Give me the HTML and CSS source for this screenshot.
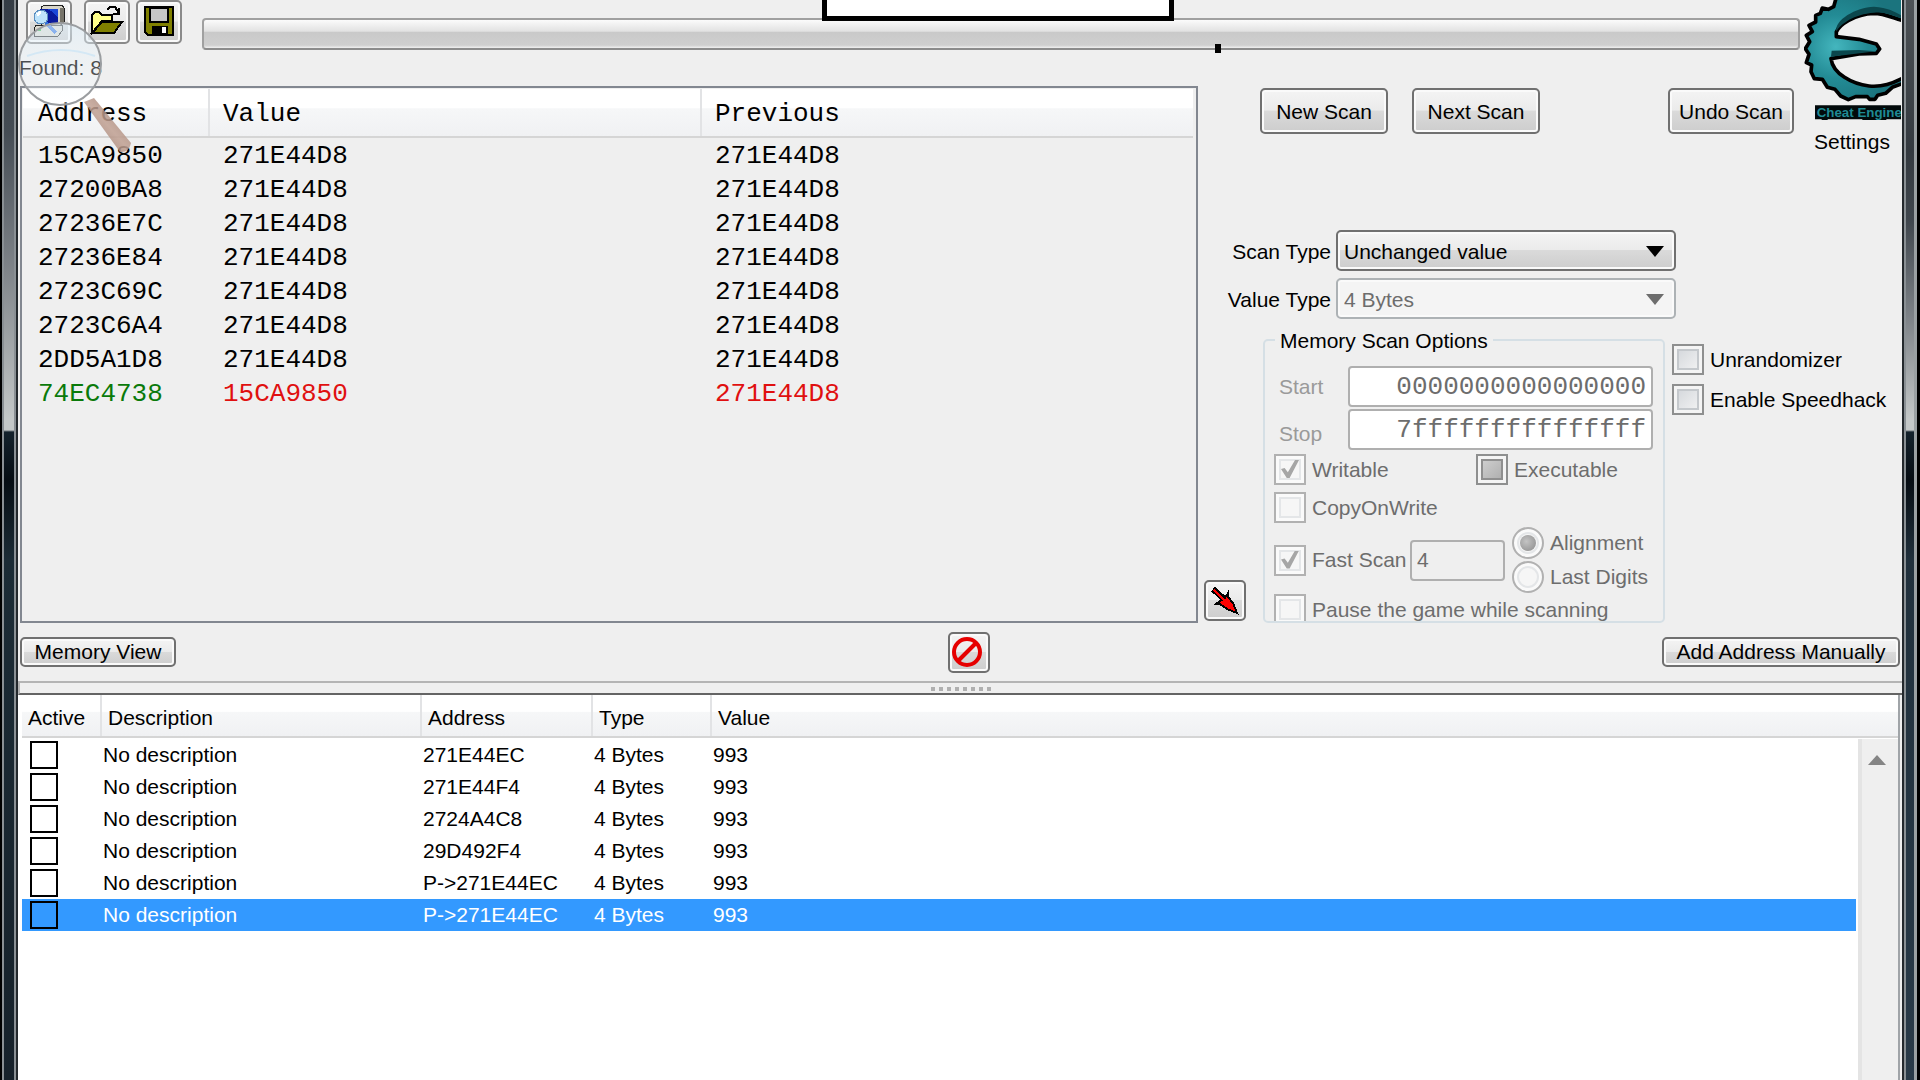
FILE: index.html
```html
<!DOCTYPE html>
<html lang="en">
<head>
<meta charset="utf-8">
<title>Cheat Engine</title>
<link rel="stylesheet" href="styles.css">
</head>
<body>
<div class="window">
  <div class="frame frame-left"></div>
  <main class="client">
    <section class="upper">
      <header class="top">
        <div class="toolbar">
          <button class="btn tool" type="button" aria-label="Select process">
            <svg width="32" height="32" viewBox="0 0 32 32" shape-rendering="crispEdges">
              <path d="M8 2L12 0H29L31 3V17L27 21H8Z" fill="#d8d5c8" stroke="#222" stroke-width="1"/>
              <path d="M27 3H31V18L27 20Z" fill="#77746a"/>
              <rect x="7" y="4" width="18" height="14" fill="#0a1a9c"/>
              <path d="M14 4H25V12L18 6Z" fill="#1c48d8"/>
              <path d="M3 20H29V26L25 31H1V24Z" fill="#dcdad0" stroke="#222" stroke-width="1"/>
              <rect x="5" y="24" width="3" height="2" fill="#2bb33a"/>
              <path d="M13 18L23 28" stroke="#2f6fe0" stroke-width="4"/>
              <circle cx="8" cy="12" r="7" fill="#bfe4fb" stroke="#5c8fc0" stroke-width="1"/>
              <path d="M4 10L8 7" stroke="#fff" stroke-width="3"/>
            </svg>
          </button>
          <button class="btn tool tool-open" type="button" aria-label="Open file">
            <svg width="34" height="30" viewBox="0 0 34 30" shape-rendering="crispEdges">
              <path d="M17 4L20 1H25L29 7M29 2V8H23" fill="none" stroke="#000" stroke-width="2"/>
              <path d="M2 27V9L5 6H9L12 9H22V15H12L2 27Z" fill="#ffff8a" stroke="#000" stroke-width="2"/>
              <path d="M2 27L12 16H32L24 27Z" fill="#808000" stroke="#000" stroke-width="2"/>
            </svg>
          </button>
          <button class="btn tool" type="button" aria-label="Save file">
            <svg width="30" height="30" viewBox="0 0 30 30" shape-rendering="crispEdges">
              <path d="M1 1H29V29H4L1 26Z" fill="#808000" stroke="#000" stroke-width="2"/>
              <rect x="6" y="2" width="18" height="14" fill="#c6c6c6" stroke="#000" stroke-width="2"/>
              <rect x="8" y="20" width="16" height="9" fill="#000"/>
              <rect x="18" y="21" width="4" height="6" fill="#fff"/>
            </svg>
          </button>
          <div class="progress" role="progressbar" aria-label="Scan progress"></div>
        </div>
        <p class="found">Found: 8</p>
      </header>

      <div class="logo">
        <svg width="97" height="120" viewBox="135 0 291 360" role="img" aria-label="Cheat Engine">
          <defs>
            <radialGradient id="teal" gradientUnits="userSpaceOnUse" cx="230" cy="140" r="190">
              <stop offset="0" stop-color="#44b6be"/>
              <stop offset=".5" stop-color="#238b95"/>
              <stop offset="1" stop-color="#1b747e"/>
            </radialGradient>
          </defs>
          <path d="M232-8L224 20L208 28L190 24L184 40L170 46L170 66L150 76L160 95L142 106L152 125L139 146L150 163L142 188L158 195L156 215L166 236L190 238L205 262L228 268L245 288L268 299L290 290L325 290L332 298L348 298L356 286L380 280L400 262L432 250V234C400 250 370 262 330 258C280 252 222 222 216 176L300 162L352 160L362 147L352 132L300 118L232 110V96C240 75 285 42 345 40C375 40 402 54 432 62V-8Z" fill="url(#teal)" stroke="#000" stroke-width="11" stroke-linejoin="round"/>
          <path d="M216 170L352 154L300 150L218 152ZM232 94C226 60 290 22 345 20C385 22 410 36 426 46V54C400 46 375 34 345 38C285 42 245 72 232 94" fill="#0b474d"/>
          <path d="M168 316H426V358H382V364H310V358H206V364H188V358H168Z" fill="#020a0b"/>
          <text class="logo-text" x="173" y="352">Cheat Engine</text>
        </svg>
        <a class="settings" href="#settings">Settings</a>
      </div>

      <div class="results">
        <table class="result-table">
          <colgroup><col class="c-addr"><col class="c-val"><col></colgroup>
          <thead><tr><th>Address</th><th>Value</th><th>Previous</th></tr></thead>
          <tbody>
            <tr><td>15CA9850</td><td>271E44D8</td><td>271E44D8</td></tr>
            <tr><td>27200BA8</td><td>271E44D8</td><td>271E44D8</td></tr>
            <tr><td>27236E7C</td><td>271E44D8</td><td>271E44D8</td></tr>
            <tr><td>27236E84</td><td>271E44D8</td><td>271E44D8</td></tr>
            <tr><td>2723C69C</td><td>271E44D8</td><td>271E44D8</td></tr>
            <tr><td>2723C6A4</td><td>271E44D8</td><td>271E44D8</td></tr>
            <tr><td>2DD5A1D8</td><td>271E44D8</td><td>271E44D8</td></tr>
            <tr class="changed"><td class="static">74EC4738</td><td>15CA9850</td><td>271E44D8</td></tr>
          </tbody>
        </table>
      </div>

      <div class="scan-buttons">
        <button class="btn scan" type="button">New Scan</button>
        <button class="btn scan" type="button">Next Scan</button>
        <button class="btn scan undo" type="button">Undo Scan</button>
      </div>

      <form class="options">
        <div class="pick">
          <label for="scan-type">Scan Type</label>
          <span class="combo"><select id="scan-type"><option>Unchanged value</option></select></span>
        </div>
        <div class="pick">
          <label for="value-type">Value Type</label>
          <span class="combo off"><select id="value-type" disabled><option>4 Bytes</option></select></span>
        </div>
        <div class="details">
          <button class="btn copy" type="button" aria-label="Add selected addresses">
            <svg width="28" height="28" viewBox="0 0 28 28" shape-rendering="crispEdges">
              <path d="M2 2L13 12" stroke="#000" stroke-width="6"/>
              <path d="M17 6V10L22 16L26 26L16 22L9 17H5L9 14L14 11Z" fill="#f00" stroke="#000" stroke-width="2"/>
              <path d="M3 3L14 14" stroke="#f00" stroke-width="2"/>
            </svg>
          </button>
          <fieldset class="memory">
            <legend>Memory Scan Options</legend>
            <div class="range">
              <label for="start">Start</label>
              <input class="field hex" id="start" type="text" value="0000000000000000" disabled>
              <label class="low" for="stop">Stop</label>
              <input class="field hex" id="stop" type="text" value="7fffffffffffffff" disabled>
            </div>
            <div class="pair">
              <label class="tick"><input type="checkbox" checked disabled>Writable</label>
              <label class="tick"><input class="mixed" type="checkbox" disabled>Executable</label>
            </div>
            <label class="tick"><input type="checkbox" disabled>CopyOnWrite</label>
            <div class="fast">
              <label class="tick"><input type="checkbox" checked disabled>Fast Scan</label>
              <input class="field align" type="text" value="4" aria-label="Alignment value" disabled>
              <div class="radios">
                <label class="tick"><input type="radio" name="mode" checked disabled>Alignment</label>
                <label class="tick"><input type="radio" name="mode" disabled>Last Digits</label>
              </div>
            </div>
            <label class="tick"><input type="checkbox" disabled>Pause the game while scanning</label>
          </fieldset>
          <div class="extras">
            <label class="tick"><input type="checkbox">Unrandomizer</label>
            <label class="tick"><input type="checkbox">Enable Speedhack</label>
          </div>
        </div>
      </form>
    </section>

    <div class="actions">
      <button class="btn slim view" type="button">Memory View</button>
      <button class="btn clear" type="button" aria-label="Clear address list">
        <svg width="34" height="32" viewBox="0 0 34 32">
          <circle cx="15" cy="16" r="13" fill="none" stroke="#e60000" stroke-width="4"/>
          <path d="M6 25L24 7" stroke="#e60000" stroke-width="4"/>
        </svg>
      </button>
      <button class="btn slim add" type="button">Add Address Manually</button>
    </div>

    <div class="splitter"><i></i><i></i><i></i><i></i><i></i><i></i><i></i><i></i></div>

    <section class="cheats">
      <table class="cheat-table">
        <colgroup><col class="d-active"><col class="d-desc"><col class="d-addr"><col class="d-type"><col></colgroup>
        <thead><tr><th>Active</th><th>Description</th><th>Address</th><th>Type</th><th>Value</th></tr></thead>
        <tbody>
          <tr><td><input type="checkbox" aria-label="Active"></td><td>No description</td><td>271E44EC</td><td>4 Bytes</td><td>993</td></tr>
          <tr><td><input type="checkbox" aria-label="Active"></td><td>No description</td><td>271E44F4</td><td>4 Bytes</td><td>993</td></tr>
          <tr><td><input type="checkbox" aria-label="Active"></td><td>No description</td><td>2724A4C8</td><td>4 Bytes</td><td>993</td></tr>
          <tr><td><input type="checkbox" aria-label="Active"></td><td>No description</td><td>29D492F4</td><td>4 Bytes</td><td>993</td></tr>
          <tr><td><input type="checkbox" aria-label="Active"></td><td>No description</td><td>P-&gt;271E44EC</td><td>4 Bytes</td><td>993</td></tr>
          <tr class="selected"><td><input type="checkbox" aria-label="Active"></td><td>No description</td><td>P-&gt;271E44EC</td><td>4 Bytes</td><td>993</td></tr>
        </tbody>
      </table>
      <div class="scrollbar"><span class="up"></span></div>
    </section>
  </main>
  <div class="frame frame-right"></div>
  <div class="popup"></div>
  <div class="caret"></div>
  <svg class="lens" width="130" height="140" viewBox="0 0 130 140">
    <defs>
      <linearGradient id="glass" x1="0" y1="0" x2="0" y2="1">
        <stop offset="0" stop-color="#dcedf8" stop-opacity=".6"/>
        <stop offset=".4" stop-color="#e8f5fd" stop-opacity=".3"/>
        <stop offset="1" stop-color="#fff" stop-opacity=".4"/>
      </linearGradient>
      <linearGradient id="wood" x1="0" y1="1" x2="1" y2="0">
        <stop offset="0" stop-color="#8c6a5c"/>
        <stop offset=".5" stop-color="#c0a092"/>
        <stop offset="1" stop-color="#8f6e60"/>
      </linearGradient>
    </defs>
    <path d="M69 82L79 78L116 123Q114 133 105 132Z" fill="url(#wood)" fill-opacity=".85"/>
    <circle cx="45" cy="44" r="41" fill="url(#glass)" stroke="#9a9da0" stroke-width="2"/>
    <path d="M12 36Q46 24 80 36" fill="none" stroke="#d4e8f5" stroke-width="2"/>
  </svg>
</div>
</body>
</html>
```
FILE: styles.css
```css
* { box-sizing: border-box; }

body {
  margin: 0;
  background: #efefef;
  color: #000;
  font: 21px/26px "Liberation Sans", Arial, sans-serif;
}

button, input, select { font: inherit; color: inherit; margin: 0; }
svg { display: block; }
p { margin: 0; }

.window {
  position: relative;
  display: grid;
  grid-template-columns: 18px minmax(0, 1fr) 18px;
  min-height: 100vh;
  overflow: hidden;
}

/* glass borders at the sides of the window */
.frame {
  background:
    linear-gradient(90deg, #000 2px, #8a9094 2px 4px, transparent 4px 14px, #8a9094 14px 16px, #24292d 16px),
    linear-gradient(#353d45, #444c54 130px, #7f8489 270px, #c4c8c8 420px, #c4c8c8 430px, #14222c 432px, #060d13 480px, #1c2c36 560px, #17222b 100%);
}
.frame-right {
  background:
    linear-gradient(90deg, #24292d 2px, #8a9094 2px 4px, transparent 4px 12px, #9aa0a2 12px 15px, #000 15px),
    linear-gradient(#4d5256, #33393f 150px, #3f464d 220px, #7f8489 320px, #c4c8c8 420px, #c4c8c8 430px, #14222c 432px, #060d13 480px, #20303c 560px, #293a48 100%);
}

.client { display: flex; flex-direction: column; min-width: 0; }

.upper {
  display: grid;
  grid-template-columns: minmax(0, 1fr) 600px 102px;
  grid-template-rows: 86px 70px auto;
}
.top { grid-column: 1 / 3; }
.logo { grid-column: 3; grid-row: 1 / 3; padding-left: 4px; }
.results { grid-column: 1; grid-row: 2 / 4; }
.scan-buttons { grid-column: 2; grid-row: 2; }
.options { grid-column: 2 / 4; grid-row: 3; }

.btn {
  display: flex;
  align-items: center;
  justify-content: center;
  padding: 0;
  border: 2px solid #707070;
  border-radius: 5px;
  background: linear-gradient(#f4f4f4, #ebebeb 48%, #dadada 50%, #cdcdcd);
  box-shadow: inset 0 0 0 2px #fafafa;
  white-space: nowrap;
}

.toolbar { display: flex; align-items: flex-start; padding-left: 8px; gap: 6px; }
.tool { width: 46px; height: 44px; border-color: #8a8a8a; padding-bottom: 2px; }
.tool-open { margin-left: 6px; }
.progress {
  flex: 1;
  height: 32px;
  margin: 18px 0 0 14px;
  border: 2px solid #a0a0a0;
  border-bottom-color: #8c8c8c;
  border-radius: 4px;
  background: linear-gradient(#fbfbfb, #e2e2e2 40%, #c9c9c9 44%, #cfcfcf 90%, #f0f0f0);
}
.found { padding: 5px 1px; }

.logo-text { font: bold 40px "Liberation Sans", Arial, sans-serif; fill: #1f8a94; }
.settings { display: block; margin-top: 9px; padding-left: 10px; color: #000; text-decoration: none; }

.results { border: 2px solid #828790; margin: 0 2px; padding: 1px 3px 0 1px; }
table { width: 100%; border-collapse: collapse; table-layout: fixed; }
th, td { padding: 0; text-align: left; font-weight: normal; white-space: nowrap; }
th { background: linear-gradient(#fff 40%, #f6f7f8 42%, #f0f1f3); border-bottom: 2px solid #d5d5d5; }
th + th { border-left: 2px solid #e2e3e5; }

.result-table { font: 26px/34px "Liberation Mono", "Courier New", monospace; }
.result-table th { height: 48px; padding: 2px 0 0 15px; }
.result-table th + th { padding-left: 13px; }
.result-table td { height: 34px; padding: 2px 0 0 15px; line-height: 32px; }
.result-table td + td { padding-left: 14px; }
.c-addr { width: 186px; }
.c-val { width: 492px; }
.changed { color: #e01010; }
.static { color: #0a7a0a; }

.scan-buttons { display: flex; align-items: flex-start; gap: 24px; padding: 2px 6px 0 60px; }
.scan { width: 128px; height: 46px; padding-top: 2px; }
.scan.undo { width: 126px; margin-left: auto; }

.options { padding-top: 74px; }
.pick { display: flex; align-items: center; gap: 5px; margin-bottom: 7px; }
.pick label { width: 131px; text-align: right; padding-top: 2px; }
.combo { position: relative; width: 340px; }
.combo select {
  display: block;
  width: 100%;
  height: 41px;
  padding: 2px 6px 0;
  border: 2px solid #707070;
  border-radius: 5px;
  appearance: none;
  background: linear-gradient(#f4f4f4, #ebebeb 48%, #dadada 50%, #cdcdcd);
  box-shadow: inset 0 0 0 2px #fafafa;
}
.combo::after {
  content: "";
  position: absolute;
  top: 16px;
  right: 12px;
  width: 18px;
  height: 11px;
  background: #000;
  clip-path: polygon(0 0, 100% 0, 50% 100%);
}
.combo.off select { border-color: #adb2b5; background: #f4f4f4; color: #6d6d6d; opacity: 1; }
.combo.off::after { background: #6d6d6d; }

.details { display: flex; align-items: flex-end; padding-left: 4px; }
.copy { width: 42px; height: 41px; margin: 0 17px 2px 0; }
.memory {
  flex: none;
  width: 402px;
  height: 297px;
  margin: 0;
  padding: 0 9px;
  border: 2px solid #d5dfe5;
  border-radius: 5px;
  overflow: hidden;
  color: #6d6d6d;
}
.memory legend { margin-left: 1px; padding: 2px 5px 0; color: #000; line-height: 26px; }
.range {
  display: grid;
  grid-template-columns: 69px 305px;
  gap: 2px 0;
  align-items: center;
  padding: 12px 0 4px 5px;
  color: #9a9a9a;
}
.low { padding-top: 8px; }
.field {
  height: 41px;
  border: 2px solid #afafaf;
  border-radius: 4px;
  padding: 0 5px;
  background: #fff;
  color: #6d6d6d;
}
.hex { width: 305px; text-align: right; font: 26px/34px "Liberation Mono", "Courier New", monospace; }
.align { width: 95px; background: #efefef; }
.pair { display: grid; grid-template-columns: 202px 1fr; margin-bottom: 7px; }

.tick { display: flex; align-items: center; gap: 6px; white-space: nowrap; line-height: 26px; }
.tick input {
  flex: none;
  position: relative;
  width: 32px;
  height: 31px;
  appearance: none;
  border: 2px solid #8e8f8f;
  background: linear-gradient(135deg, #cfd3d8, #f6f6f6);
  box-shadow: inset 0 0 0 3px #f4f4f4, inset 0 0 0 5px #c4c8cc;
}
.memory .tick input { border-color: #b1b1b1; background: #f6f6f6; box-shadow: inset 0 0 0 3px #fafafa, inset 0 0 0 5px #e4e6e8; }
.memory .tick .mixed { border-color: #8e8f8f; background: linear-gradient(135deg, #d6d6d6, #a8a8a8); box-shadow: inset 0 0 0 3px #f4f4f4, inset 0 0 0 5px #8f8f8f; }
.tick input[type="checkbox"]:checked::before {
  content: "";
  position: absolute;
  inset: 4px 5px 5px;
  background: #a6a6a6;
  clip-path: polygon(0 50%, 20% 45%, 38% 68%, 78% 0, 100% 0, 48% 100%, 32% 100%);
}
.tick input[type="radio"] { height: 32px; border-radius: 50%; }
.tick input[type="radio"]:checked::before {
  content: "";
  position: absolute;
  inset: 6px;
  border-radius: 50%;
  background: radial-gradient(circle at 40% 40%, #c4c4c4, #8a8a8a);
}
.fast { display: flex; align-items: center; margin: 4px 0 1px; }
.fast > .tick { width: 136px; }
.radios { display: grid; gap: 2px; margin-left: 7px; }

.extras { display: flex; flex-direction: column; gap: 9px; align-self: flex-start; padding: 18px 0 0 7px; }

.actions {
  display: grid;
  grid-template-columns: 1fr auto 1fr;
  align-items: center;
  height: 58px;
  padding: 0 2px;
}
.slim { height: 30px; }
.view { width: 156px; }
.clear { width: 42px; height: 41px; margin-left: 18px; }
.add { width: 238px; justify-self: end; }

.splitter {
  display: flex;
  justify-content: center;
  gap: 4px;
  height: 14px;
  padding-top: 4px;
  border-top: 2px solid #b4b4b4;
  border-bottom: 2px solid #646464;
  border-left: 2px solid #b4b4b4;
}
.splitter i { width: 4px; height: 4px; background: #b0b0b0; }

.cheats {
  position: relative;
  flex: 1;
  min-height: 380px;
  margin-right: 2px;
  padding: 0 0 0 4px;
  border-right: 2px solid #a0a4a8;
  background: #fff;
}
.cheat-table thead th { height: 42px; padding: 4px 0 0 6px; }
.cheat-table tbody::before { content: ""; display: block; height: 1px; }
.cheat-table td { height: 32px; padding-left: 2px; }
.cheat-table td:first-child { padding-left: 8px; }
.d-active { width: 79px; }
.d-desc { width: 320px; }
.d-addr { width: 171px; }
.d-type { width: 119px; }
.cheat-table input {
  display: block;
  width: 28px;
  height: 28px;
  appearance: none;
  border: 2px solid #000;
}
.selected { background: #3399ff; color: #fff; }

.scrollbar {
  position: absolute;
  top: 44px;
  right: 0;
  bottom: 0;
  width: 42px;
  border-left: 2px solid #fff;
  background: linear-gradient(90deg, #e4e4e4 4px, #efefef 4px);
}
.up { display: block; width: 18px; height: 10px; margin: 16px 0 0 10px; background: #858585; clip-path: polygon(50% 0, 100% 100%, 0 100%); }

/* things lying over the window */
.popup {
  position: absolute;
  top: -5px;
  left: 822px;
  width: 352px;
  height: 26px;
  border: 5px solid #000;
  background: #fff;
}
.caret { position: absolute; top: 44px; left: 1215px; width: 6px; height: 9px; background: #000; }
.lens { position: absolute; top: 20px; left: 15px; pointer-events: none; }
```
